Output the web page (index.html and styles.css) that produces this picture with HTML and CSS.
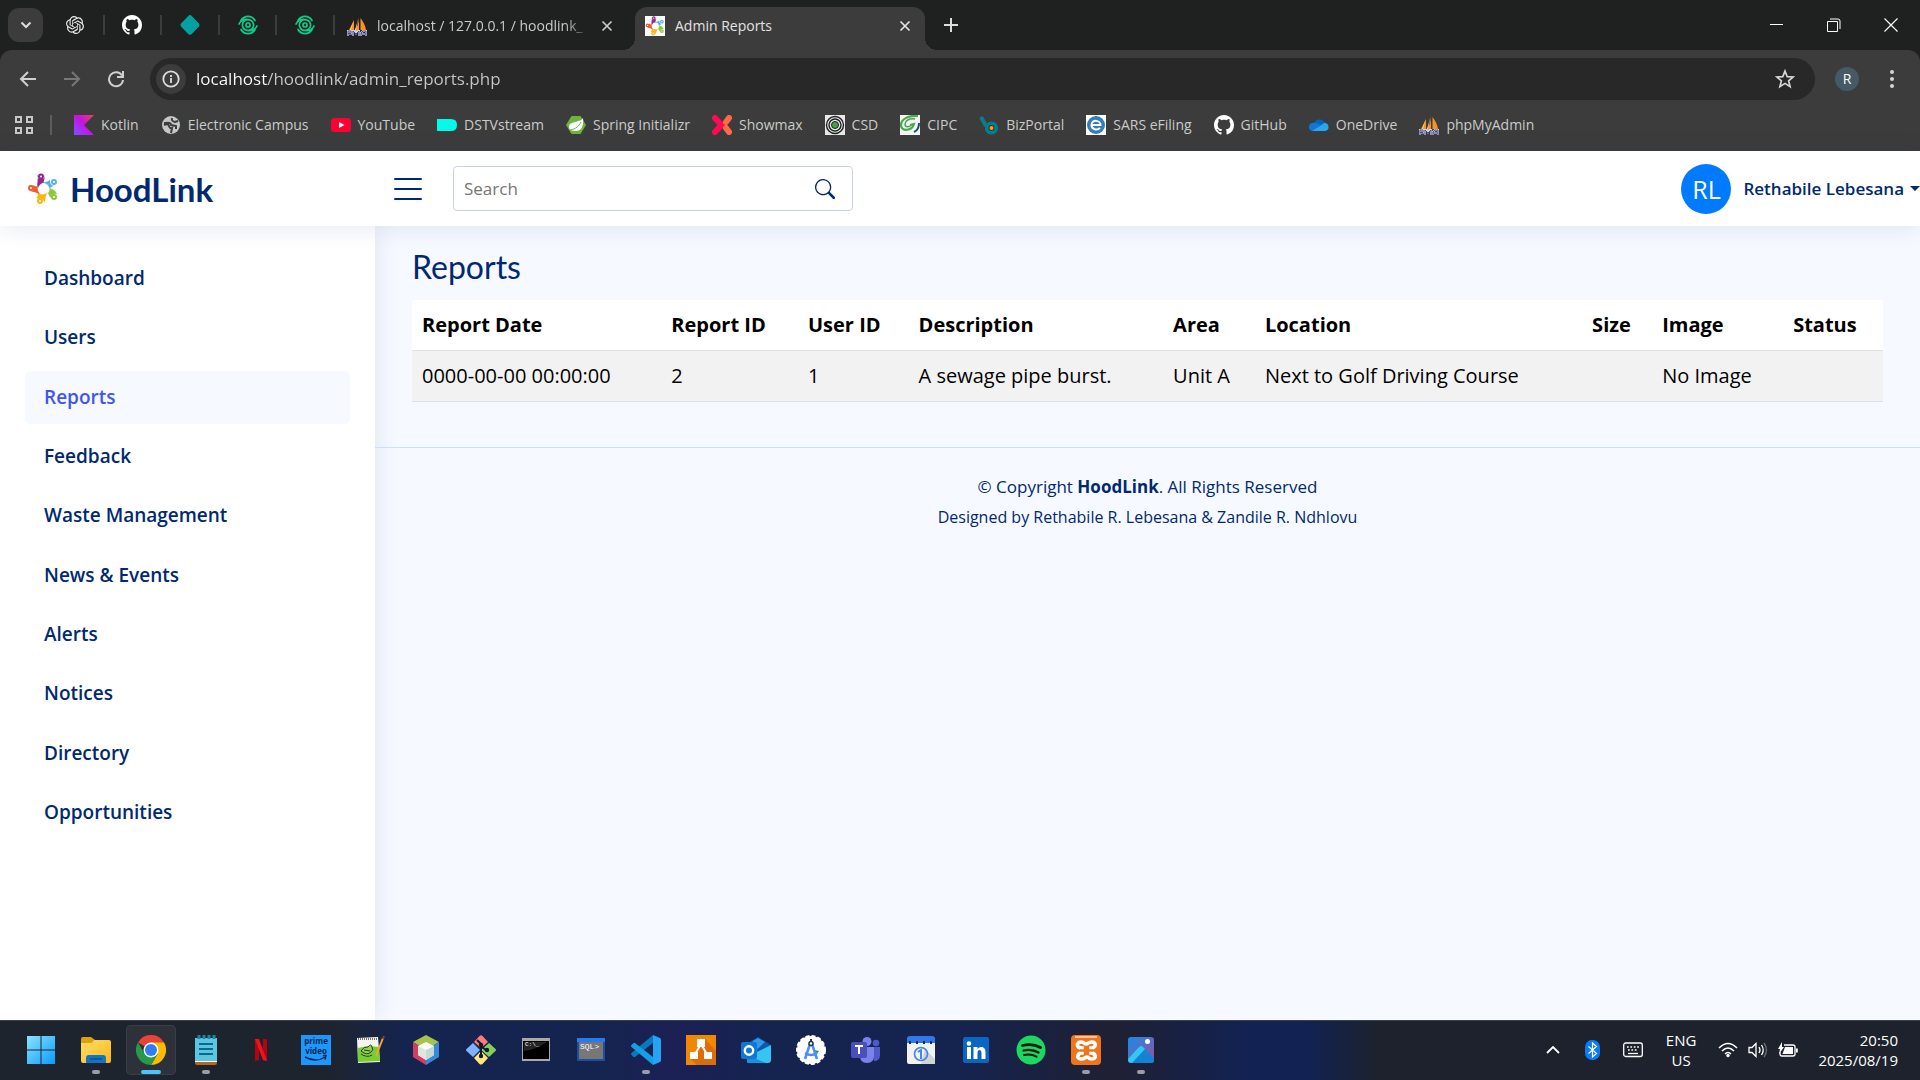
FILE: index.html
```html
<!DOCTYPE html>
<html lang="en">
<head>
<meta charset="utf-8">
<meta name="viewport" content="width=device-width, initial-scale=1">
<title>Admin Reports</title>
<link rel="stylesheet" href="styles.css">
</head>
<body>
<svg class="defs" aria-hidden="true">
  <symbol id="github" viewBox="0 0 16 16"><path d="M8 0C3.58 0 0 3.58 0 8c0 3.54 2.29 6.53 5.47 7.59.4.07.55-.17.55-.38 0-.19-.01-.82-.01-1.49-2.01.37-2.53-.49-2.69-.94-.09-.23-.48-.94-.82-1.13-.28-.15-.68-.52-.01-.53.63-.01 1.08.58 1.23.82.72 1.21 1.87.87 2.33.66.07-.52.28-.87.51-1.07-1.78-.2-3.64-.89-3.64-3.95 0-.87.31-1.59.82-2.15-.08-.2-.36-1.02.08-2.12 0 0 .67-.21 2.2.82.64-.18 1.32-.27 2-.27s1.36.09 2 .27c1.53-1.04 2.2-.82 2.2-.82.44 1.1.16 1.92.08 2.12.51.56.82 1.27.82 2.15 0 3.07-1.87 3.75-3.65 3.95.29.25.54.73.54 1.48 0 1.07-.01 1.93-.01 2.2 0 .21.15.46.55.38A8.01 8.01 0 0 0 16 8c0-4.42-3.58-8-8-8" fill="#fff"/></symbol>
  <symbol id="print" viewBox="0 0 20 20"><g fill="none" stroke="#10c98d" stroke-width="1.7" stroke-linecap="round"><circle cx="10" cy="10" r="2"/><path d="M3 5.500C6 0 14 0 17 5.500M1 9C4 2.500 14 3 15.500 9c.8 5-4 8-8.500 5.500M17 14.500C14 20 6 20 3 14.500M19 11C16 17.500 6 17 4.500 11c-.8-5 4-8 8.500-5.500"/></g></symbol>
  <symbol id="pma" viewBox="0 0 20 20"><path d="M7 4v10H2zM12 0v14H7.500C11 10 12 6 12 0zM13.500 2c3 4 5 8 5.500 12h-5.500z" fill="#f7931e"/><path d="M6.500 5 3 14h1zM11.500 2 8 14h1z" fill="#ffd9a0"/><path d="M1 20v-5h3v2.500H1M6 20v-5h2l1 2 1-2h2v5M14 20v-3l2-2h3v5M14 18h5" fill="none" stroke="#cfd0ea" stroke-width="2"/><path d="M1 20v-5h3v2.500H1M6 20v-5l3 3 3-3v5M14 20v-3l2-2h3v5M14 18h5" fill="none" stroke="#4a4c87" stroke-width="1"/></symbol>
  <symbol id="people" viewBox="0 0 30 32"><g fill="none" stroke-width="2"><circle cx="13" cy="3.500" r="2" stroke="#92278f"/><circle cx="26" cy="9" r="2" stroke="#55b4e5"/><circle cx="26" cy="24" r="2" stroke="#8cc63f"/><circle cx="12" cy="28" r="2" stroke="#fbb615"/><circle cx="3" cy="15" r="2" stroke="#f15a29"/></g><path d="M9 1c0 4 1 5 4 5s4-1 3-4c2 3-1 6 0 8-3 0-5 2-6 5-2-3 1-8-1-14z" fill="#92278f"/><path d="M28 12c-4 2-6-1-6-5-3 2-6 2-8 3 4 0 7 2 7 5 2 0 3-2 7-3z" fill="#55b4e5"/><path d="M29 21c-3-1-6 0-6 4-2-2-3-5-3-5 2-2 2-4 1-6 3 3 6 2 8 7z" fill="#8cc63f"/><path d="M16 30c0-3-2-5-5-4l-3-1c2-2 2-3 2-5 3 2 7 2 10-1-3 4-2 7-4 11z" fill="#fbb615"/><path d="M1 19c4 0 5-3 4-7 2 1 3 2 5 1-1 3 0 6 2 8-3 0-5-3-11-2z" fill="#f15a29"/></symbol>
  <symbol id="close" viewBox="0 0 12 12"><path d="m1.500 1.500 9 9m0-9-9 9" stroke="currentColor" stroke-width="1.7"/></symbol>
</svg>

<div class="browser">
  <div class="tabs">
    <button class="tab-search" aria-label="Search tabs"><svg width="12" height="8" viewBox="0 0 12 8"><path d="m1.500 1.500 4.500 4.500 4.500-4.500" fill="none" stroke="#ddd" stroke-width="2"/></svg></button>
    <div class="pinned">
      <button aria-label="ChatGPT"><svg width="18" height="18" viewBox="0 0 24 24"><path fill="#e8e8e8" d="M22.282 9.821a5.985 5.985 0 0 0-.516-4.910 6.046 6.046 0 0 0-6.510-2.900A6.065 6.065 0 0 0 4.981 4.182a5.985 5.985 0 0 0-3.998 2.900 6.046 6.046 0 0 0 .743 7.097 5.980 5.980 0 0 0 .510 4.911 6.051 6.051 0 0 0 6.515 2.900A5.985 5.985 0 0 0 13.260 24a6.056 6.056 0 0 0 5.772-4.206 5.990 5.990 0 0 0 3.998-2.900 6.056 6.056 0 0 0-.748-7.073zM13.260 22.430a4.476 4.476 0 0 1-2.876-1.041l.142-.080 4.778-2.758a.795.795 0 0 0 .393-.681v-6.737l2.020 1.169a.071.071 0 0 1 .038.052v5.583a4.504 4.504 0 0 1-4.495 4.493zM3.600 18.304a4.471 4.471 0 0 1-.535-3.014l.142.085 4.783 2.758a.771.771 0 0 0 .781 0l5.843-3.368v2.332a.080.080 0 0 1-.033.062L9.740 19.950a4.499 4.499 0 0 1-6.140-1.646zM2.341 7.896a4.485 4.485 0 0 1 2.365-1.973V11.600a.766.766 0 0 0 .388.677l5.814 3.354-2.020 1.169a.076.076 0 0 1-.071 0l-4.830-2.787A4.504 4.504 0 0 1 2.341 7.872zm16.597 3.855-5.833-3.387L15.119 7.200a.076.076 0 0 1 .071 0l4.830 2.791a4.494 4.494 0 0 1-.676 8.105v-5.678a.790.790 0 0 0-.406-.667zm2.010-3.023-.142-.085-4.773-2.782a.776.776 0 0 0-.785 0L9.409 9.230V6.897a.066.066 0 0 1 .028-.062l4.830-2.787a4.499 4.499 0 0 1 6.681 4.660zM8.306 12.863l-2.020-1.164a.080.080 0 0 1-.038-.057V6.074a4.499 4.499 0 0 1 7.376-3.453l-.142.080-4.778 2.758a.795.795 0 0 0-.393.681zm1.097-2.365 2.602-1.500 2.607 1.500v2.999l-2.597 1.500-2.607-1.500z"/></svg></button>
      <button aria-label="GitHub"><svg width="20" height="20"><use href="#github"/></svg></button>
      <button aria-label="Diamond"><svg width="20" height="20" viewBox="0 0 20 20"><path d="M10 0q1 0 2 1.200l7 7.300q1 1.500 0 3l-7 7.300Q10 21 8 18.800l-7-7.300q-1-1.500 0-3l7-7.300Q9 0 10 0z" fill="#05a0a0"/></svg></button>
      <button aria-label="Fingerprint"><svg width="20" height="20"><use href="#print"/></svg></button>
      <button aria-label="Fingerprint"><svg width="20" height="20"><use href="#print"/></svg></button>
    </div>
    <div class="tab"><svg width="20" height="20"><use href="#pma"/></svg><span class="tab-title fade">localhost / 127.0.0.1 / hoodlink_</span><button aria-label="Close tab"><svg width="12" height="12"><use href="#close"/></svg></button></div>
    <div class="tab active"><svg class="favicon" width="20" height="20"><use href="#people"/></svg><span class="tab-title">Admin Reports</span><button aria-label="Close tab"><svg width="12" height="12"><use href="#close"/></svg></button></div>
    <button class="new-tab" aria-label="New tab"><svg width="14" height="14" viewBox="0 0 14 14"><path d="M7 0v14M0 7h14" stroke="#ddd" stroke-width="2"/></svg></button>
    <div class="window">
      <button aria-label="Minimize"><svg width="14" height="14" viewBox="0 0 14 14"><path d="M0 6.500h13" stroke="#fff"/></svg></button>
      <button aria-label="Restore"><svg width="14" height="14" viewBox="0 0 14 14"><path d="M.5 3.500h10v10H.5zM3 1h8q2 0 2 2v8" fill="none" stroke="#fff"/></svg></button>
      <button aria-label="Close"><svg width="14" height="14" viewBox="0 0 14 14"><path d="m.5.5 13 13m0-13-13 13" stroke="#fff" stroke-width="1.200"/></svg></button>
    </div>
  </div>

  <div class="toolbar">
    <button aria-label="Back"><svg width="18" height="16" viewBox="0 0 18 16"><path d="M17 8H2m7-7L2 8l7 7" fill="none" stroke="#cfcfcf" stroke-width="2"/></svg></button>
    <button aria-label="Forward"><svg width="18" height="16" viewBox="0 0 18 16"><path d="M1 8h15M9 1l7 7-7 7" fill="none" stroke="#777" stroke-width="2"/></svg></button>
    <button aria-label="Reload"><svg width="18" height="18" viewBox="0 0 18 18"><path d="M15 5.500A7 7 0 1 0 16 10M16 1v6h-6" fill="none" stroke="#cfcfcf" stroke-width="2"/></svg></button>
    <div class="omnibox">
      <button class="site-info" aria-label="Site information"><svg width="18" height="18" viewBox="0 0 18 18"><circle cx="9" cy="9" r="7.700" fill="none" stroke="#ddd" stroke-width="1.800"/><path d="M9 8v5M9 5v2" stroke="#ddd" stroke-width="1.800"/></svg></button>
      <input class="url" aria-label="Address" value="localhost/hoodlink/admin_reports.php">
      <button class="star" aria-label="Bookmark"><svg width="20" height="20" viewBox="0 0 20 20"><path d="m10 2 2.200 5.600 6 .4-4.600 3.800 1.500 5.900L10 14.400l-5.100 3.300 1.500-5.900L1.800 8l6-.4z" fill="none" stroke="#d5d5d5" stroke-width="1.700"/></svg></button>
    </div>
    <button class="profile" aria-label="Profile">R</button>
    <button class="more" aria-label="Menu"><svg width="4" height="18" viewBox="0 0 4 18"><g fill="#d5d5d5"><circle cx="2" cy="2" r="2"/><circle cx="2" cy="9" r="2"/><circle cx="2" cy="16" r="2"/></g></svg></button>
  </div>

  <nav class="bookmarks" aria-label="Bookmarks">
    <button class="apps" aria-label="Apps"><svg width="18" height="18" viewBox="0 0 18 18"><path d="M1 1h5v5H1zM12 1h5v5h-5zM1 12h5v5H1zM12 12h5v5h-5z" fill="none" stroke="#c7c7c7" stroke-width="2"/></svg></button>
    <a href="#"><svg width="20" height="20" viewBox="0 0 20 20"><defs><linearGradient id="kt" x1="1" y1="0" x2="0" y2="1"><stop offset="0" stop-color="#e44857"/><stop offset=".45" stop-color="#c711e1"/><stop offset="1" stop-color="#7f52ff"/></linearGradient></defs><path d="M0 0h20L10 10l10 10H0z" fill="url(#kt)"/></svg>Kotlin</a>
    <a href="#"><svg width="20" height="20" viewBox="0 0 20 20"><circle cx="10" cy="10" r="9" fill="#c4c7c5"/><path d="M11 3q-1 3 3 4l3-1M3 10q4-2 5 1t3 2l-1 5M3 8c3 0 7-1 7 2l5 1v3" fill="none" stroke="#3c3c3c" stroke-width="2"/></svg>Electronic Campus</a>
    <a href="#"><svg width="20" height="20" viewBox="0 0 20 20"><rect y="3" width="20" height="14" rx="3.500" fill="#ff0033"/><path d="m8 7 5.500 3L8 13z" fill="#fff"/></svg>YouTube</a>
    <a href="#"><svg width="20" height="20" viewBox="0 0 20 20"><path d="M0 4h14q6 0 6 6t-6 6H0z" fill="#00fbe9"/></svg>DSTVstream</a>
    <a href="#"><svg width="20" height="20" viewBox="0 0 20 20"><path d="M5.500 1h9L20 10l-5.500 9h-9L0 10z" fill="#6db33f"/><path d="M17 3c1 9-2 13-7 13-4 0-7-1-7-4 0-5 5-4 9-6 2 0 4-1 5-3z" fill="#fff"/><path d="M4 15c6-1 9-4 11-8" fill="none" stroke="#6db33f"/></svg>Spring Initializr</a>
    <a href="#"><svg width="20" height="20" viewBox="0 0 20 20"><path d="m3 3 6.500 7L3 17" fill="none" stroke="#ff0a54" stroke-width="6" stroke-linecap="round" stroke-linejoin="round"/><path d="m17 3-3 4M14 13l3 4" stroke="#ff6b45" stroke-width="6" stroke-linecap="round"/></svg>Showmax</a>
    <a href="#"><svg width="20" height="20" viewBox="0 0 20 20"><path d="M0 0h20v20H0z" fill="#e8e8e8"/><g fill="none" stroke="#222" stroke-width="1.400"><circle cx="10" cy="10" r="8.500"/><circle cx="10" cy="10" r="6"/></g><circle cx="10" cy="10" r="3.500" fill="#3fa33f" stroke="#222"/></svg>CSD</a>
    <a href="#"><svg width="20" height="20" viewBox="0 0 20 20"><path d="M0 0h20v20H0z" fill="#f4f4f4"/><path d="M18 1C9 0 1 4 1 10c0 7 11 6 13-1l-4 1" fill="none" stroke="#4aa84e" stroke-width="2.200"/><path d="M15 4C9 3 5 6 5 9c0 4 5 3 6 1" fill="none" stroke="#4aa84e" stroke-width="1.500"/><path d="M19 8q0 7-5 9" fill="none" stroke="#164f70" stroke-width="2"/></svg>CIPC</a>
    <a href="#"><svg width="20" height="20" viewBox="0 0 20 20"><path d="m2 2 5 9" stroke="#087d8b" stroke-width="4"/><circle cx="12.500" cy="13" r="4.800" fill="#333" stroke="#087d8b" stroke-width="3.500"/><circle cx="12.500" cy="13" r="2" fill="#f7a21b"/></svg>BizPortal</a>
    <a href="#"><svg width="20" height="20" viewBox="0 0 20 20"><path d="M0 0h20v20H0z" fill="#fff"/><circle cx="10" cy="10" r="9" fill="#337fb8"/><path d="M5.500 10h9c0-5-9-6-9 0 0 5 6 5.500 8.500 3" fill="none" stroke="#fff" stroke-width="2"/></svg>SARS eFiling</a>
    <a href="#"><svg width="20" height="20"><use href="#github"/></svg>GitHub</a>
    <a href="#"><svg width="20" height="20" viewBox="0 0 20 20"><path d="M5 8a6 6 0 0 1 11 0l-5 5z" fill="#0364b8"/><path d="M4 16a4 4 0 0 1 0-8q3-1 6 1l6 6z" fill="#0f78d4"/><path d="m3 16 8-5 4-3a4 4 0 0 1 1 8z" fill="#28a8ea"/></svg>OneDrive</a>
    <a href="#"><svg width="20" height="20"><use href="#pma"/></svg>phpMyAdmin</a>
  </nav>
</div>

<div class="app">
  <header class="header">
    <a class="logo" href="#"><svg width="30" height="32"><use href="#people"/></svg><span>HoodLink</span></a>
    <button class="toggle" aria-label="Toggle sidebar"><svg width="28" height="24" viewBox="0 0 28 24"><path d="M1 2h26M1 12h26M1 22h26" stroke="#012970" stroke-width="2" stroke-linecap="round"/></svg></button>
    <form class="search">
      <input type="text" placeholder="Search" aria-label="Search">
      <button type="button" aria-label="Search"><svg width="20" height="20" viewBox="0 0 16 16"><path fill="#012970" d="M11.742 10.344a6.500 6.500 0 1 0-1.397 1.398h-.001q.044.060.098.115l3.850 3.850a1 1 0 0 0 1.415-1.414l-3.850-3.850a1 1 0 0 0-.115-.100zM12 6.500a5.500 5.500 0 1 1-11 0 5.500 5.500 0 0 1 11 0"/></svg></button>
    </form>
    <a class="user" href="#"><span class="initials">RL</span><span class="name">Rethabile Lebesana</span><span class="caret"></span></a>
  </header>

  <div class="body">
    <aside class="sidebar">
      <ul>
        <li><a href="#">Dashboard</a></li>
        <li><a href="#">Users</a></li>
        <li><a class="current" href="#">Reports</a></li>
        <li><a href="#">Feedback</a></li>
        <li><a href="#">Waste Management</a></li>
        <li><a href="#">News &amp; Events</a></li>
        <li><a href="#">Alerts</a></li>
        <li><a href="#">Notices</a></li>
        <li><a href="#">Directory</a></li>
        <li><a href="#">Opportunities</a></li>
      </ul>
    </aside>
    <div class="content">
      <main>
        <h1>Reports</h1>
        <table>
          <thead><tr><th>Report Date</th><th>Report ID</th><th>User ID</th><th>Description</th><th>Area</th><th>Location</th><th>Size</th><th>Image</th><th>Status</th></tr></thead>
          <tbody><tr><td>0000-00-00 00:00:00</td><td>2</td><td>1</td><td>A sewage pipe burst.</td><td>Unit A</td><td>Next to Golf Driving Course</td><td></td><td>No Image</td><td></td></tr></tbody>
        </table>
      </main>
      <footer>
        <p>© Copyright <strong>HoodLink</strong>. All Rights Reserved</p>
        <p class="credits">Designed by Rethabile R. Lebesana &amp; Zandile R. Ndhlovu</p>
      </footer>
    </div>
  </div>
</div>

<div class="taskbar">
  <div class="pins">
    <button aria-label="Start"><svg width="30" height="30" viewBox="0 0 30 30"><defs><linearGradient id="win" x1="0" y1="0" x2="1" y2="1"><stop offset="0" stop-color="#8be3ff"/><stop offset="1" stop-color="#0a9bff"/></linearGradient></defs><path d="M1 1h13.500v13.500H1zM15.500 1H29v13.500H15.500zM1 15.500h13.500V29H1zM15.500 15.500H29V29H15.500z" fill="url(#win)"/></svg></button>
    <button class="running" aria-label="File Explorer"><svg width="30" height="30" viewBox="0 0 30 30"><defs><linearGradient id="fold" x1="0" y1="0" x2="1" y2="1"><stop offset="0" stop-color="#ffdd6b"/><stop offset="1" stop-color="#fbb919"/></linearGradient></defs><path d="M0 4q0-2 2-2h8l4 3v5H0z" fill="#dfa00d"/><path d="M0 8h9q3 0 4-3h15q2 0 2 2v19q0 2-2 2H2q-2 0-2-2z" fill="url(#fold)"/><path d="M5 28v-5q0-3 3-3h14q3 0 3 3v5z" fill="#1374c4"/><path d="M9 24h12" stroke="#0b3f75"/></svg></button>
    <button class="running selected" aria-label="Google Chrome"><svg width="30" height="30" viewBox="0 0 30 30"><path d="M15 15 2 7.500A15 15 0 0 1 28 7.500z" fill="#ea4335"/><path d="M15 15V7.500h13A15 15 0 0 1 15 30l6.500-11z" fill="#fbbc04"/><path d="M15 15 8.500 18.800 2 7.500A15 15 0 0 0 15 30l6.500-11z" fill="#259b48"/><circle cx="15" cy="15" r="7.500" fill="#fff"/><circle cx="15" cy="15" r="6" fill="#2f7df2"/></svg></button>
    <button class="running" aria-label="Notepad"><svg width="30" height="30" viewBox="0 0 30 30"><path d="M4 24h22v4q0 2-2 2H6q-2 0-2-2z" fill="#b9661d"/><path d="M4 24h22v3H4z" fill="#fff"/><path d="M4 3h22v23H4z" fill="#5cc5e2"/><path d="M8 0v4m5-4v4m5-4v4m5-4v4" stroke="#1a87a8" stroke-width="3"/><path d="M8 9h14M8 14h14M8 19h14" stroke="#0e6888" stroke-width="2"/></svg></button>
    <button aria-label="Netflix"><svg width="30" height="30" viewBox="0 0 30 30"><path d="M9 4h4v21l-4 1zM17 4h4v22l-4-1z" fill="#b1060f"/><path d="M9 4h4l8 22-4-1z" fill="#ed1420"/></svg></button>
    <button aria-label="Prime Video"><svg width="30" height="30" viewBox="0 0 30 30"><path d="M0 0h30v30H0z" fill="#1a98ff"/><text x="15" y="9" class="prime">prime</text><text x="15" y="19" class="prime">video</text><path d="M4 22q11 6 20 0M22 20.500h3l-1 4" fill="none" stroke="#0c2547" stroke-width="1.500"/></svg></button>
    <button aria-label="Notepad++"><svg width="30" height="30" viewBox="0 0 30 30"><path d="m1 3 21-1 2 25-22 1z" fill="#f5f5ed"/><path d="M2 13q10-3 21-1l1 14-22 1z" fill="#77ce32"/><path d="M2 4h20" stroke="#777" stroke-width="2" stroke-dasharray="1 1"/><path d="M5 16q3-5 7-4 3-4 4 0 2 3-1 5-4 4-10-1zm0 3q6 4 11 1m-8-5 6 1" fill="#92d050" stroke="#263b21"/><path d="M27 3 20 21" stroke="#f4a431" stroke-width="2"/><path d="m27 4 1-3" stroke="#853e2e" stroke-width="2"/></svg></button>
    <button aria-label="NetBeans"><svg width="30" height="30" viewBox="0 0 30 30"><path d="m15 0 13 7-13 8L2 7z" fill="#a6c34b"/><path d="m2 7 13 8v15L2 22z" fill="#d23d63"/><path d="m28 7-13 8v15l13-8z" fill="#3788d7"/><path d="m15 7 8 4v9l-8 5-8-5v-9z" fill="#fff"/><path d="m7 11 8 4v10l-8-5z" fill="#dfe5df"/><path d="m23 11-8 4v10l8-5z" fill="#c5d8d4"/></svg></button>
    <button aria-label="Git"><svg width="30" height="30" viewBox="0 0 30 30"><path d="m8 7 5.500-6q1.500-1.500 3 0L22 7l-7 6z" fill="#ff7b7b"/><path d="m7 8 7 7-7 7-6.500-6q-1-1 0-2z" fill="#80b3ff"/><path d="m23 8-8 7 8 7 6.500-6q1-1 0-2z" fill="#85d05a"/><path d="m8 23 7-7 7 7-5.500 6q-1.500 1-3 0z" fill="#ffe680"/><path d="m11 5 4 4v13m0-11 6 5" fill="none" stroke="#111a2d" stroke-width="2"/><circle cx="15" cy="10" r="2.200" fill="#111a2d"/><circle cx="15" cy="21" r="2.200" fill="#111a2d"/><circle cx="21" cy="15" r="2.200" fill="#111a2d"/></svg></button>
    <button aria-label="Command Prompt"><svg width="30" height="30" viewBox="0 0 30 30"><path d="M1 3h28v23H1z" fill="#aaa"/><path d="M2 6h26v18H2z" fill="#000"/><path d="M3 16Q16 14 26 7H3z" fill="#242424"/><text x="4" y="11" class="prompt">C:\_</text></svg></button>
    <button aria-label="SQL Plus"><svg width="30" height="30" viewBox="0 0 30 30"><path d="M1 3h28v23H1z" fill="#1d4f9f"/><path d="M1 3h28v4H1z" fill="#287af3"/><path d="M3 7h24v17H3z" fill="#777"/><text x="4" y="14" class="prompt sql">SQL&gt;</text></svg></button>
    <button class="running" aria-label="Visual Studio Code"><svg width="30" height="30" viewBox="0 0 30 30"><path d="m22 0 7 3q1 .5 1 2v20q0 1.500-1 2l-7 3z" fill="#24a4f2"/><path d="M22 0v8L4 22q-1 .5-2-.5l-1.500-1.500q-1-1 0-2z" fill="#0879bd"/><path d="M22 30v-8L4 8Q3 7.500 2 8.500L.5 10q-1 1 0 2z" fill="#149ee4"/></svg></button>
    <button aria-label="draw.io"><svg width="30" height="30" viewBox="0 0 30 30"><path d="M0 0h30v30H0z" fill="#f08705"/><path d="m19 4 11 12v14H11l-7-7 9-9z" fill="#df6c0c"/><path d="m15 9-7 12m7-12 7 12" stroke="#fff" stroke-width="2"/><path d="M11 4h8v8h-8zM4 17h8v7H4zM18 17h8v7h-8z" fill="#fff"/></svg></button>
    <button aria-label="Outlook"><svg width="30" height="30" viewBox="0 0 30 30"><path d="m5 9 12-7 13 8v6L8 26z" fill="#0b58b0"/><path d="m12 6 5-3 7 4-14 13V10z" fill="#2e9be8"/><path d="m30 10-24 12v5q0 1 2 1h19q3 0 3-3z" fill="#36c4f0"/><path d="M6 20 25 28H8q-2 0-2-2z" fill="#1a8fe0"/><rect y="7" width="16" height="17" rx="2" fill="#0f78d4"/><circle cx="8" cy="15.500" r="4.200" fill="none" stroke="#fff" stroke-width="2.400"/></svg></button>
    <button aria-label="Android Studio"><svg width="30" height="30" viewBox="0 0 30 30"><circle cx="15" cy="15" r="14" fill="#fff"/><circle cx="15" cy="15" r="14" fill="none" stroke="#fff" stroke-width="2" stroke-dasharray="4 2"/><path d="m18 15 5 1-3 4z" fill="#259b48"/><path d="M14 9 9 24m7-15 5 15M9 18q6 4 12 0" fill="none" stroke="#4c8df6" stroke-width="2.500"/><circle cx="15" cy="8.500" r="2" fill="#fff" stroke="#25344b" stroke-width="1.500"/><path d="M15 4v3" stroke="#25344b" stroke-width="2"/></svg></button>
    <button aria-label="Teams"><svg width="30" height="30" viewBox="0 0 30 30"><circle cx="25" cy="8" r="3.300" fill="#5059c9"/><path d="M21 12h8v8q0 6-6 6z" fill="#5059c9"/><circle cx="16" cy="6.500" r="4.500" fill="#7b83eb"/><path d="M9 12h14v9q0 7-7 7t-7-7z" fill="#7b83eb"/><rect y="7" width="16" height="16" rx="2" fill="#4951b9"/><path d="M4 11h8M8 11v8" stroke="#fff" stroke-width="2"/></svg></button>
    <button aria-label="Calendar"><svg width="30" height="30" viewBox="0 0 30 30"><path d="M1 3h28v24q0 2-2 2H3q-2 0-2-2z" fill="#f2f2f2"/><path d="M1 4q0-3 3-3h22q3 0 3 3v4H1z" fill="#3078ed"/><path d="M4 6v3m7-3v3m7-3v3m7-3v3" stroke="#222d45" stroke-width="2"/><path d="m19 14 10 10v5H15z" fill="#d1d3d5"/><circle cx="15" cy="19" r="6.500" fill="none" stroke="#4285f4" stroke-width="1.700"/><path d="m12 17 3-2v9" fill="none" stroke="#4285f4" stroke-width="2"/></svg></button>
    <button aria-label="LinkedIn"><svg width="30" height="30" viewBox="0 0 30 30"><rect x="2" y="2" width="26" height="26" rx="2" fill="#0a66c2"/><circle cx="8" cy="8.500" r="2.300" fill="#fff"/><path d="M8 12v12" stroke="#fff" stroke-width="4"/><path d="M12.500 24V12h4v2c2-3 8-3 8 3v7h-4v-6c0-4-4-4-4 0v6z" fill="#fff"/></svg></button>
    <button aria-label="Spotify"><svg width="30" height="30" viewBox="0 0 30 30"><circle cx="15" cy="15" r="14.500" fill="#1ed760"/><g fill="none" stroke="#101a14" stroke-linecap="round"><path d="M6.500 10.500q10-2.500 18 2" stroke-width="2.800"/><path d="M7.500 15.500q8-2 15 2" stroke-width="2.300"/><path d="M8 20q7-1.500 12.500 1.700" stroke-width="2"/></g></svg></button>
    <button class="running" aria-label="XAMPP"><svg width="30" height="30" viewBox="0 0 30 30"><rect width="30" height="30" rx="4" fill="#ef751c"/><path d="M4 2h22" stroke="#ffc194" stroke-width="2"/><path d="M11 13c-6 0-6-6-1-6 4 0 3 2 5 2s2-2 6-2c5 0 4 6-1 6v5c5 0 6 6 1 6-4 0-3-2-5-2s-2 2-6 2c-5 0-4-6 1-6z" fill="none" stroke="#fff" stroke-width="3.500"/><path d="M9 15.500h13" stroke="#ef751c" stroke-width="2.500"/></svg></button>
    <button class="running" aria-label="Photos"><svg width="30" height="30" viewBox="0 0 30 30"><defs><linearGradient id="photo" x1="0" y1="0" x2="1" y2="1"><stop offset="0" stop-color="#178ce8"/><stop offset="1" stop-color="#9a4f9d"/></linearGradient></defs><rect x="2" y="2" width="26" height="26" rx="3" fill="url(#photo)"/><circle cx="21.500" cy="6.500" r="2.500" fill="#fff"/><path d="m2 24 11-12q2-2 4 0l11 11v2q0 3-3 3H5q-3 0-3-3z" fill="#1283d5"/><path d="m2 24 11-12q2-2 4 0l2 2L6 28q-4 0-4-4z" fill="#35c6f5"/></svg></button>
  </div>
  <div class="tray">
    <button class="chevron" aria-label="Show hidden icons"><svg width="14" height="8" viewBox="0 0 14 8"><path d="m1 7 6-6 6 6" fill="none" stroke="#fff" stroke-width="1.800"/></svg></button>
    <button class="bluetooth" aria-label="Bluetooth"><svg width="15" height="20" viewBox="0 0 15 20"><rect width="15" height="20" rx="7" fill="#0a7bf5"/><path d="m3.500 6.500 8 7-4 3.500V3l4 3.500-8 7" fill="none" stroke="#fff" stroke-width="1.200"/></svg></button>
    <button class="keyboard" aria-label="Touch keyboard"><svg width="20" height="16" viewBox="0 0 20 16"><rect x=".7" y="1" width="18.600" height="13.500" rx="2" fill="none" stroke="#fff" stroke-width="1.300"/><path d="M4 5h12M5 8h10" stroke="#fff" stroke-width="1.700" stroke-dasharray="1.700 1.700"/><path d="M5 11.500h10" stroke="#fff" stroke-width="1.300"/></svg></button>
    <button class="lang">ENG<br>US</button>
    <button class="status" aria-label="Network, volume and battery">
      <svg width="20" height="16" viewBox="0 0 20 16"><path d="M1 6q9-9 18 0M4 9q6-6 12 0M7 12q3-3 6 0" fill="none" stroke="#fff" stroke-width="1.500"/><circle cx="10" cy="13.500" r="1.700" fill="#fff"/></svg>
      <svg width="20" height="16" viewBox="0 0 20 16"><path d="M1 5.500h3l4-4v13l-4-4H1z" fill="none" stroke="#fff" stroke-width="1.300"/><path d="M11 5q2 3 0 6M13.500 3q3.500 5 0 10" fill="none" stroke="#fff" stroke-width="1.300"/><path d="M16 1q5 7 0 14" fill="none" stroke="#6a6e75" stroke-width="1.300"/></svg>
      <svg width="20" height="16" viewBox="0 0 20 16"><path d="M6 3h9q2 0 2 2v7q0 2-2 2H4q-2 0-2-2v-2" fill="none" stroke="#fff" stroke-width="1.300"/><path d="M7 5h8v7H4.500zM18 6.500h1.800v4H18zM4 0 0 7h2l-1 5 5-7H4z" fill="#fff"/></svg>
    </button>
    <button class="clock">20:50<br>2025/08/19</button>
  </div>
</div>
</body>
</html>
```
FILE: styles.css
```css
* { box-sizing: border-box; }
body {
  margin: 0;
  min-height: 100vh;
  display: flex;
  flex-direction: column;
  background: #f6f9ff;
  color: #000;
  font: 20px/30px "Open Sans", "Noto Sans", sans-serif;
}
button, input { font: inherit; color: inherit; border: 0; padding: 0; margin: 0; background: none; }
button { display: flex; align-items: center; justify-content: center; }
a { color: inherit; text-decoration: none; }
svg { display: block; flex: none; }
.defs { position: absolute; width: 0; height: 0; }

/* Browser frame */
.browser { background: #1f2120; color: #c9cbca; font-size: 14px; line-height: 20px; }
.tabs { display: flex; align-items: flex-end; height: 50px; }
.tab-search { width: 35px; height: 34px; margin: 0 4px 8px 8px; border-radius: 11px; background: #3c3c3c; }
.pinned { display: grid; grid-template-columns: repeat(5, 1fr); width: 288px; height: 50px; align-items: center; }
.pinned button { height: 20px; border-right: 2px solid #3c3c3c; }
.tab { display: flex; align-items: center; width: 300px; height: 43px; padding: 0 22px 6px 12px; }
.tab-title { flex: 1; margin: 0 10px; overflow: hidden; white-space: nowrap; }
.fade { -webkit-mask-image: linear-gradient(90deg, #000 88%, transparent); mask-image: linear-gradient(90deg, #000 88%, transparent); }
.active { position: relative; width: 290px; padding: 0 14px 6px 10px; border-radius: 12px 12px 0 0; background: #3c3c3c; color: #e3e3e3; }
.active::before, .active::after { content: ""; position: absolute; bottom: 0; width: 12px; height: 12px; }
.active::before { right: 100%; background: radial-gradient(circle at 0 0, transparent 12px, #3c3c3c 12px); }
.active::after { left: 100%; background: radial-gradient(circle at 100% 0, transparent 12px, #3c3c3c 12px); }
.favicon { background: #fff; }
.new-tab { width: 34px; height: 34px; margin: 0 9px 8px; }
.window { display: flex; margin-left: auto; padding-right: 1px; }
.window button { width: 57px; height: 50px; }

.toolbar { display: flex; align-items: center; height: 58px; padding: 0 20px 0 6px; border-radius: 12px 12px 0 0; background: #3c3c3c; }
.toolbar > button { width: 44px; height: 40px; }
.omnibox { flex: 1; display: flex; align-items: center; height: 42px; margin: 0 15px 0 12px; padding: 0 20px 0 6px; border-radius: 21px; background: #282828; }
.site-info { width: 30px; height: 30px; border-radius: 15px; background: #3c3c3c; }
.url {
  flex: 1;
  margin-left: 10px;
  font-size: 17px;
  color: transparent;
  background: linear-gradient(90deg, #fff 72px, #c7c7c7 72px);
  -webkit-background-clip: text;
  background-clip: text;
}
.toolbar > .profile { width: 24px; height: 24px; margin: 0 5px; border-radius: 12px; background: #455a64; color: #fff; font-size: 14px; }
.toolbar > .more { width: 16px; margin-left: 20px; }

.bookmarks { display: flex; align-items: center; gap: 22px; height: 43px; padding: 0 15px 10px; background: #3c3c3c; }
.bookmarks a { display: flex; align-items: center; gap: 7px; white-space: nowrap; }
.apps { width: 37px; height: 20px; justify-content: flex-start; border-right: 2px solid #5c5e5d; }

/* Application */
.app { flex: 1; display: flex; flex-direction: column; }
.header { position: relative; z-index: 1; display: flex; align-items: center; height: 75px; padding-left: 28px; background: #fff; color: #012970; box-shadow: 0 2px 25px rgba(1, 41, 112, .1); }
.logo { display: flex; align-items: center; gap: 12px; width: 350px; font: 700 33px/40px Lato, "Open Sans", sans-serif; }
.toggle { margin: 0 31px 0 16px; }
.search { display: flex; align-items: center; width: 400px; height: 45px; padding: 0 17px 0 10px; border: 1px solid #c8d2e4; border-radius: 4px; }
.search input { flex: 1; min-width: 0; font-size: 17px; outline: 0; }
.search input::placeholder { color: #757575; opacity: 1; }
.user { display: flex; align-items: center; margin-left: auto; font-size: 17px; font-weight: 600; }
.initials { width: 50px; height: 50px; margin-right: 12px; border-radius: 25px; background: #007bff; color: #fff; font-size: 25px; font-weight: 400; line-height: 50px; text-align: center; }
.caret { margin-left: 6px; border: 5px solid transparent; border-top-color: currentColor; border-bottom: 0; }
.body { flex: 1; display: flex; }
.sidebar { width: 375px; padding: 26px 25px; background: #fff; box-shadow: 0 0 25px rgba(1, 41, 112, .1); }
.sidebar ul { display: flex; flex-direction: column; justify-content: space-between; min-height: 587px; margin: 0; padding: 0; list-style: none; }
.sidebar a { display: block; padding: 12px 19px; border-radius: 5px; color: #012970; font-size: 19px; line-height: 29px; font-weight: 600; }
.sidebar .current { background: #f6f9ff; color: #4154f1; }
.content { flex: 1; min-width: 0; }
main { padding: 23px 37px 45px; }
h1 { margin: 0 0 15px; color: #012970; font: 400 32px/36px Lato, "Open Sans", sans-serif; }
table { width: 100%; border-collapse: collapse; background: #fff; }
th, td { padding: 10px; border-bottom: 1px solid #dee2e6; text-align: left; }
th { font-weight: 700; }
tbody { background: #f2f2f2; }
footer { padding: 23px 0; border-top: 1px solid #cddfff; color: #012970; text-align: center; }
footer p { margin: 0; font-size: 17px; line-height: 31px; }
footer .credits { font-size: 16px; }

/* Desktop taskbar */
.taskbar {
  display: flex;
  justify-content: space-between;
  height: 60px;
  padding: 0 22px 2px 16px;
  border-top: 1px solid #3a414c;
  background: linear-gradient(90deg, #1e242d 17%, #15244f 21%, #15244f 31%, #1c2055 35%, #14244f 40%, #15234f 50%, #1f2033 58%, #122253 65%, #122253 68%, #1d222c 72%);
  color: #fff;
}
.pins { display: flex; align-items: center; gap: 5px; }
.pins button { position: relative; width: 50px; height: 50px; border-radius: 5px; }
.pins .selected { background: #2d323a; box-shadow: inset 0 0 0 1px #3a3f47; }
.running::after { content: ""; position: absolute; bottom: 1px; left: 21px; width: 8px; height: 4px; border-radius: 2px; background: #9a9da6; }
.selected::after { left: 15px; width: 20px; background: #4cc2ff; }
.prime { font: 700 8px/8px "Open Sans", sans-serif; fill: #0c2547; text-anchor: middle; }
.prompt { font: 6px "Liberation Mono", monospace; fill: #fff; }
.sql { font-size: 8px; }
.tray { display: flex; align-items: center; font-size: 15px; line-height: 20px; }
.chevron { margin-right: 25px; }
.bluetooth { margin-right: 23px; }
.keyboard { margin-right: 23px; }
.lang { margin-right: 22px; }
.status { gap: 10px; margin-right: 20px; }
.clock { text-align: right; }
```
